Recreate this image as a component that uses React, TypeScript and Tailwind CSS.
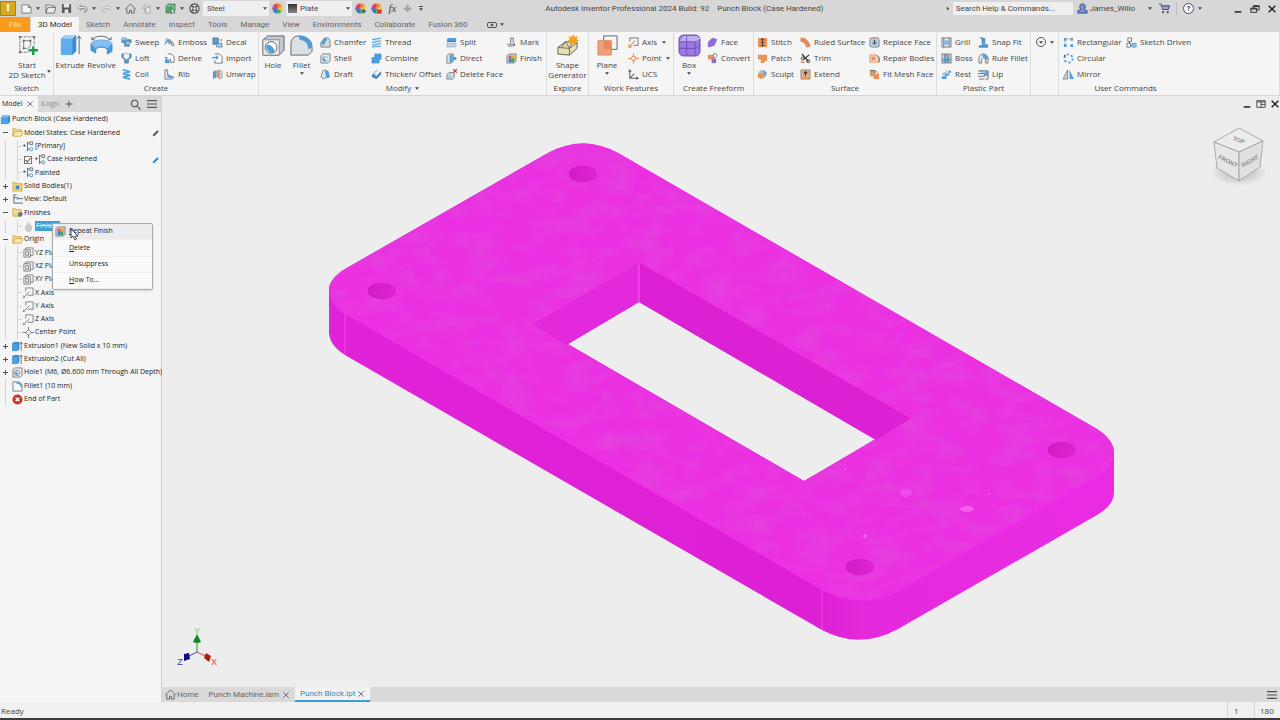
import type { ReactNode } from "react";

const BLUE = "#4f9fdc";
const SKY = "#9ccbf0";
const INK = "#5c6268";
const CLAY = "#e8935c";
const VIOLET = "#8f6bd6";

const glyphs: Record<string, ReactNode> = {
  sweep: <><path d="M1 1h5v2h5v3H9v4H4V6H1z" fill={BLUE} stroke={INK} strokeWidth=".7" /><path d="M1 1h5v2H1z" fill={SKY} /><path d="M6 5h3v3H6z" fill={SKY} /></>,
  loft: <><path d="M1 1h10v4L8 7v4H4V7L1 5z" fill={BLUE} stroke={INK} strokeWidth=".7" /><path d="M3 1h6v4L6 7 3 5z" fill="#e7f2fb" /></>,
  coil: <path d="M2 1l8 2-8 2 8 2-8 2 8 2" fill="none" stroke={BLUE} strokeWidth="1.8" />,
  emboss: <><path d="M1 8C3 1 8 1 11 10M3 5c3-2 5 0 6 5" fill="none" stroke={INK} strokeWidth="1" /><path d="M4 4l4 1-2 4z" fill={BLUE} /><path d="M1 4l3-3M2 7l3-3" stroke={BLUE} strokeWidth="1" /></>,
  derive: <><path d="M4 1h4l3 3v6H6" fill="#fff" stroke={INK} strokeWidth=".9" /><path d="M1 7h5v4H1z" fill={BLUE} /><path d="M1 5h2v2M7 6v3" stroke={INK} strokeWidth="1" fill="none" /></>,
  rib: <><path d="M1 1h3v6l7 2-2 2H1z" fill="#e4e7ea" stroke={INK} strokeWidth=".8" /><path d="M4 4c1 3 3 4 6 4l-2 2-4-1z" fill={BLUE} /></>,
  decal: <><path d="M1 1h6v7H1z" fill={BLUE} stroke={INK} strokeWidth=".7" /><path d="M5 7h6v4H5z" fill={SKY} stroke={INK} strokeWidth=".6" /><path d="M10 2v3" stroke={INK} /></>,
  importIcon: <><path d="M3 1h5l3 3v7H3V8" fill="#fff" stroke={INK} strokeWidth=".9" /><path d="M0 5h6M4 3l2.500 2L4 7" fill="none" stroke={BLUE} strokeWidth="1.300" /></>,
  unwrap: <><path d="M1 3l4-2v8l-4 2z" fill={BLUE} /><path d="M5 2l3-1v9l-3-1z" fill={CLAY} /><path d="M8 1l3 2v7l-3 1z" fill="#d9dcdf" stroke={INK} strokeWidth=".5" /></>,
  chamfer: <><path d="M1 6l4-5h4l2 3v7H1z" fill="#d9dcdf" stroke={INK} strokeWidth=".8" /><path d="M1 7l4-6 3 1-4 7z" fill={BLUE} /></>,
  shell: <><path d="M1 3l2-2h8v8l-2 2H1z" fill="#e2e5e8" stroke={INK} strokeWidth=".8" /><path d="M3 4h5v5H3z" fill={BLUE} /><path d="M4 5h4v4z" fill="#fff" /></>,
  draft: <><path d="M1 9l2-7 3-1 1 8-3 2z" fill="#dfe2e5" stroke={INK} strokeWidth=".7" /><path d="M6 1l3 1 2 7-4 1z" fill={BLUE} /></>,
  thread: <><path d="M2 1h8v10H2z" fill="#e2e5e8" /><path d="M1 3l10-2M1 6l10-2M1 9l10-2M1 11l10-1" stroke={BLUE} strokeWidth="1.100" /></>,
  combine: <path d="M4 1h7v6H9v4H1V5h3z" fill={BLUE} stroke="#377fb8" strokeWidth=".5" />,
  thicken: <><path d="M1 7l5-5 5 2-5 6z" fill={BLUE} stroke={INK} strokeWidth=".7" /><path d="M3 5l4-3 3 1-4 4z" fill="#fff" /><path d="M1 7l5 2 5-5v2l-5 5-5-2z" fill="#4a86b8" /></>,
  split: <><path d="M1 2l2-1h8v3l-1 1H1z" fill={BLUE} /><path d="M1 5h10" stroke={INK} /><path d="M1 7h10v3l-1 1H1z" fill="#c9d4dc" stroke={BLUE} strokeWidth=".5" /></>,
  direct: <><path d="M1 3l2-2h5v8l-2 2H1z" fill="#e2e5e8" stroke={INK} strokeWidth=".8" /><path d="M4 2h3v8H4z" fill={BLUE} /><path d="M7 6h4M9 4l2 2-2 2" stroke="#2d76ad" fill="none" /></>,
  deleteFace: <><path d="M1 6l2-2h6v5l-2 2H1z" fill="#d9dcdf" stroke={INK} strokeWidth=".8" /><path d="M2 7h4v3H2z" fill={SKY} /><path d="M8 0l4 4m0-4L8 4" stroke="#d33131" strokeWidth="1.200" /></>,
  mark: <><path d="M5 1h3v5l2 2H4l1-2z" fill="#dfe2e5" stroke={INK} strokeWidth=".8" /><path d="M3 7c-3 3 1 4 7 2" stroke={INK} fill="none" /></>,
  finish: <><path d="M1 3l2-2h8v8l-2 2H1z" fill="#c9ccd0" stroke={INK} strokeWidth=".7" /><path d="M3 3h3v3H3z" fill="#e8473c" /><path d="M6 3h4v3H6z" fill="#f5a623" /><path d="M3 6h3v4H3z" fill="#3a7bd5" /><path d="M6 6h3v4H6z" fill="#3ca55c" /></>,
  axis: <><path d="M2 5V1h9v8H6" fill="none" stroke={INK} strokeWidth=".9" /><path d="M1 11l7-7M1 8v3h3" stroke={CLAY} strokeWidth="1.200" fill="none" /></>,
  point: <><path d="M6 0v12M0 6h12" stroke={CLAY} /><path d="M6 3l3 3-3 3-3-3z" fill="#fff" stroke={CLAY} strokeWidth="1.200" /></>,
  ucs: <><path d="M2 1v9h9M2 10l5-5" stroke={INK} fill="none" strokeWidth="1.100" /><path d="M0 3l2-3 2 3zM9 8l3 2-3 2z" fill={INK} /></>,
  face: <path d="M2 5l4-4 5 2c-2 2-2 4-3 6l-6 2c-1-2-1-4 0-6z" fill={VIOLET} stroke="#6d4fb0" strokeWidth=".6" />,
  convert: <><path d="M1 2h6v5H1z" fill={CLAY} /><path d="M5 6h5v5H5z" fill={VIOLET} /><path d="M7 1h3l1 2-2 2H7z" fill="#fff" stroke={INK} strokeWidth=".8" /></>,
  stitch: <><path d="M1 1h10v10H1z" fill={CLAY} /><path d="M6 1v10M4 3h4M4 6h4M4 9h4" stroke="#5d3a22" strokeWidth=".9" /></>,
  patch: <path d="M1 2h10v7H8v2H4V7H1z" fill={CLAY} />,
  sculpt: <><circle cx="6" cy="5" r="4" fill="#b8bdc2" /><path d="M1 5h6v5l-3 1-3-2z" fill={CLAY} /><path d="M7 1l4 3-3 6z" fill="#6f9ec4" /></>,
  ruled: <path d="M1 1c6 0 9 4 10 9l-4 1C6 7 4 5 1 5zM5 2L4 6M8 5L6 8" fill={CLAY} stroke="#c2693a" strokeWidth=".6" />,
  trim: <><path d="M2 1l7 8M10 2L4 7" stroke="#333" strokeWidth="1.300" /><circle cx="9" cy="9" r="1.600" fill="none" stroke="#333" /><circle cx="3" cy="6" r="1.600" fill="none" stroke="#333" /><path d="M1 9h4v2H1z" fill={CLAY} /></>,
  extend: <><path d="M1 1h10v10H1z" fill="#d9b292" stroke={INK} strokeWidth=".6" /><path d="M1 9h10v2H1z" fill={CLAY} /><path d="M6 2l2.500 3h-2v3h-1V5h-2z" fill="#333" /></>,
  replaceFace: <><path d="M1 3l2-2h6l2 2v7l-2 1H3l-2-1z" fill="#cfd5da" stroke={INK} strokeWidth=".8" /><path d="M3 3h6v6H3z" fill={SKY} /><path d="M6 3v4M4 6l2 2 2-2" stroke="#333" fill="none" /><path d="M1 1h10" stroke={CLAY} /></>,
  repair: <><path d="M1 2h6l4 3v5H1z" fill="#f0d6c6" stroke={CLAY} /><path d="M3 4h4v4H3z" fill={CLAY} /><path d="M8 2l3 3v5" stroke={INK} fill="none" /></>,
  fitMesh: <><path d="M1 1h6v4H1z" fill={INK} /><path d="M1 2h5v6H1z" fill="#c9a368" /><path d="M5 5h6v6H5z" fill={CLAY} /><path d="M7 2l3 2" stroke={CLAY} strokeWidth="1.200" /></>,
  grill: <><path d="M1 1h10v10H1z" fill="#dfe6ec" stroke={INK} strokeWidth=".8" /><path d="M3 1v10M9 1v10" stroke={INK} strokeWidth=".8" /><circle cx="6" cy="6" r="2" fill={SKY} stroke={BLUE} /></>,
  boss: <><path d="M1 1h3v10H1zM5 1h2v10H5zM8 1h3v10H8z" fill="#cfd6dc" stroke={INK} strokeWidth=".8" /><path d="M2 6h8v3H2z" fill={BLUE} /></>,
  rest: <><path d="M1 8h3V5h4V2h3v2H9v3H6v4H1z" fill={BLUE} /><path d="M1 6h2V4h3V1" fill="none" stroke="#8d99a3" strokeWidth=".7" /></>,
  snapFit: <><path d="M4 1h4v7h3v3H1V9h3z" fill={BLUE} /><path d="M2 1h3v3" fill="none" stroke={INK} /><path d="M1 11h10" stroke={INK} /></>,
  ruleFillet: <><path d="M1 11V6c0-3 2-5 5-5s5 3 5 5v5H8V7L6 5 4 7v4z" fill="#e2e5e8" stroke={INK} strokeWidth=".8" /><path d="M5 1c4 0 6 2 6 6H8C8 5 7 4 5 4z" fill={BLUE} /></>,
  lip: <><path d="M0 2h11v4H7" fill={SKY} /><path d="M0 2h11v9H8M0 5h7v3H0M1 11h6" fill="none" stroke={INK} strokeWidth=".9" /><path d="M8 3h3v5H8z" fill={BLUE} /></>,
  rectangular: <><path d="M2 2h8M2 2v8" stroke={INK} strokeWidth=".8" strokeDasharray="1 1" /><path d="M1 1h3v3H1zM1 8h3v3H1zM8 8h3v3H8z" fill={BLUE} /><path d="M8 1h3v3H8z" fill="#8b99a5" /></>,
  circular: <><circle cx="6" cy="6" r="4.500" fill="none" stroke={BLUE} strokeWidth="2" strokeDasharray="2.400 2.300" /><path d="M1 2h2v2H1z" fill={INK} /></>,
  mirror: <><path d="M5 1v10H0z" fill="#c9d0d6" stroke={INK} strokeWidth=".7" /><path d="M7 1v10h5z" fill={BLUE} /></>,
  sketchDriven: <><path d="M2 1h4v4H2zM1 7h4v4H1z" fill="#fff" stroke={INK} strokeWidth=".9" /><path d="M7 7h4v4H7z" fill={SKY} stroke={BLUE} /><path d="M4 5v2M5 9h2" stroke={INK} /></>,
  part: <><path d="M1 4l2-3h8v7l-2 3H1z" fill="#2f86d1" /><path d="M1 4l2-3h8L9 4z" fill="#7fbdf0" /><path d="M1 4h8v7H1z" fill="#4ba0e6" /></>,
  folder: <><path d="M1 10V2h3l1 1h5v2" fill="#f7dc8c" stroke="#c79a2b" strokeWidth=".8" /><path d="M1 10l2-5h9l-2 5z" fill="#fbe9b4" stroke="#c79a2b" strokeWidth=".8" /></>,
  bodies: <><path d="M1 2h4l1 1h5v8H1z" fill="#f5d676" stroke="#c79a2b" strokeWidth=".8" /><path d="M4 5h4v4H4z" fill="#3d8ac9" /></>,
  finishes: <><path d="M1 10V2h3l1 1h5v7z" fill="#f7dc8c" stroke="#c79a2b" strokeWidth=".8" /><circle cx="9" cy="8" r="2.600" fill="#4a7fd0" /><path d="M9 8V5.400A2.600 2.600 0 0 1 11.600 8z" fill="#e34b3f" /><path d="M9 8H6.400A2.600 2.600 0 0 0 9 10.600z" fill="#35a051" /></>,
  state: <><path d="M0 5h3M1.500 3.500v3M5 1v10M5 2h2M5 9h2" stroke={INK} fill="none" /><path d="M7.500 1h3v3h-3z" fill="none" stroke={INK} strokeWidth=".9" /><circle cx="9" cy="9" r="1.700" fill="#fff" stroke="#3d8ac9" /></>,
  view: <><path d="M2 1v9h3M2 4h3M2 1h3M7 5h5M7 10h5" stroke={INK} fill="none" /><path d="M5 3h2v3H5zM5 9h2v2H5z" fill={BLUE} /></>,
  flame: <path d="M6 0c0 3 4 4 4 7.500C10 10 8 12 6 12s-4-2-4-4.500C2 5 5 4 6 0z" fill="#c9c9c9" />,
  plane: <path d="M1 3h7v8H1zM3 3V1h8v8H8M3 5h3v4H3z" fill="none" stroke={INK} strokeWidth=".8" />,
  workAxis: <path d="M3 5V1h8v8H5M0 12l7-7M0 9v3h3" fill="none" stroke={INK} strokeWidth=".8" />,
  center: <><path d="M6 0v12M0 6h12" stroke={INK} strokeWidth=".9" /><path d="M6 3l3 3-3 3-3-3z" fill="#fff" stroke={INK} strokeWidth=".9" /></>,
  extrusion: <><path d="M0 3l2-2h6v8l-2 2H0z" fill="#3a8dd2" /><path d="M0 3h6v8H0z" fill={BLUE} /><path d="M10 11V2M8.500 3.500L10 1l1.500 2.500" stroke={INK} fill="none" strokeWidth=".9" /></>,
  hole: <><path d="M1 3l2-2h8v8l-2 2H1z" fill="#e5e8ea" stroke={INK} strokeWidth=".8" /><circle cx="5.500" cy="6.500" r="2.800" fill="#fff" stroke={INK} strokeWidth=".8" /><circle cx="5" cy="7" r="1.500" fill={BLUE} /></>,
  fillet: <><path d="M1 11V1h5c3 0 5 2 5 5v5z" fill="#f4f6f8" stroke={INK} strokeWidth=".8" /><path d="M5 1c4 0 6 2 6 6L9 6C9 4 8 3 5 3z" fill={BLUE} /></>,
  end: <><circle cx="6" cy="6" r="5.500" fill="#c9352d" /><path d="M4 4l4 4m0-4L4 8" stroke="#fff" strokeWidth="1.500" /></>,
  newFile: <path d="M1 2h7l3 3v6H1zM8 2v3h3" fill="#f4f4f4" stroke={INK} strokeWidth=".8" />,
  open: <path d="M1 11V2h4l1 1h4v2M1 11l2-6h9l-2 6z" fill="#ececec" stroke={INK} strokeWidth=".9" />,
  save: <><path d="M1 1h9l1 1v9H1z" fill="#555b60" /><path d="M3 1h6v4H3zM4 7h4v4H4z" fill="#e7e7e7" /></>,
  undo: <path d="M4 2L1 5l3 3V6h4c2 0 2 3 0 3v1c4 0 4-6 0-6H4z" fill="#eee" stroke={INK} strokeWidth=".7" />,
  redo: <path d="M8 2l3 3-3 3V6H4C2 6 2 9 4 9v1C0 10 0 4 4 4h4z" fill="#e6e6e6" stroke="#a9a9a9" strokeWidth=".7" />,
  home: <path d="M0 7l6-6 6 6M2 6v5h3V8h2v3h3V6" fill="none" stroke={INK} strokeWidth="1" />,
  update: <path d="M5 1L2 6h3l-2 5M5 5h5v6H5zM7 3h3v2" fill="#e4e4e4" stroke="#a3a3a3" strokeWidth=".9" />,
  select: <><path d="M1 3l2-2h8v7l-2 3H1z" fill="#4da56a" stroke={INK} strokeWidth=".6" /><path d="M1 3h8v8" stroke="#d9f0df" strokeWidth=".6" fill="none" /><path d="M7 5v7l2-2 2 1z" fill="#fff" stroke="#333" strokeWidth=".5" /></>,
  wheel: <><circle cx="6" cy="6" r="5" fill="#dedede" stroke="#444" strokeWidth="1.200" /><circle cx="6" cy="6" r="2" fill="none" stroke="#444" /><path d="M2.500 2.500l2 2m3 3l2 2m0-7l-2 2m-3 3l-2 2" stroke="#444" strokeWidth="1.300" /></>,
  colors: <><circle cx="6" cy="6" r="5.500" fill="#f2c230" /><path d="M6 6V.5A5.500 5.500 0 0 1 10.800 3.200z" fill="#f0872d" /><path d="M6 6L.9 4A5.500 5.500 0 0 1 6 .5z" fill="#e03d64" /><path d="M6 6L1 8.500A5.500 5.500 0 0 1 .9 4z" fill="#7a55c7" /><path d="M6 6v5.500A5.500 5.500 0 0 1 1 8.500z" fill="#2a7fd4" /><path d="M6 6l4.500 3.200A5.500 5.500 0 0 1 6 11.500z" fill="#41ad55" /></>,
  plus: <path d="M4.500 1h3v3.500H11v3H7.500V11h-3V7.500H1v-3h3.500z" fill="#a3a3a3" />,
  user: <path d="M6 1c2 0 3 1 3 3 0 1-.5 2-1 3l3 1.500V11H1V8.500L4 7C3.500 6 3 5 3 4c0-2 1-3 3-3z" fill="#7d93cf" stroke="#32457f" strokeWidth="1" />,
  cart: <><path d="M0 1h2l2 6h6l1.500-4H3" fill="none" stroke="#44527e" strokeWidth="1.100" /><path d="M4 4h7M4.500 5.500h6" stroke="#44527e" strokeWidth=".7" /><circle cx="4.500" cy="10" r="1.200" fill="#44527e" /><circle cx="9.500" cy="10" r="1.200" fill="#44527e" /></>,
  search: <><circle cx="5" cy="5" r="3.600" fill="none" stroke="#555" strokeWidth="1.200" /><path d="M8 8l3.500 3.500" stroke="#555" strokeWidth="1.300" /></>,
  menu: <path d="M0 2h12M0 6h12M0 10h12" stroke="#555" strokeWidth="1.400" />,
  close: <path d="M2 2l8 8m0-8l-8 8" stroke="#555" strokeWidth="1.200" />,
  closeBold: <path d="M2 2l8 8m0-8l-8 8" stroke="#222" strokeWidth="1.700" />,
  add: <path d="M6 1v10M1 6h10" stroke="#555" strokeWidth="1.500" />,
  pencil: <path d="M1 11l1-3 6-6 2 2-6 6z" fill="currentColor" />,
  check: <path d="M2 6l3 3 5-6" fill="none" stroke="#555" strokeWidth="1.600" />,
  minimize: <path d="M2 9.500h8" stroke="#222" strokeWidth="1.800" />,
  restore: <path d="M1 5h7v5H1zM4 5V2h7v5H8M1 6h7M4 3h7" fill="none" stroke="#222" strokeWidth="1.100" />,
  tile: <path d="M1 2h10v8H1zM1 3.500h10M6 3v7M6 6.500h5" fill="none" stroke="#333" strokeWidth="1" />,
};

glyphs.adjust = <>{glyphs.colors}<path d="M9.500 6.500v5M7 9h5" stroke="#2a63c8" strokeWidth="1.600" /></>;
glyphs.clear = <>{glyphs.colors}<path d="M7.500 7.500l4 4m0-4l-4 4" stroke="#d62828" strokeWidth="1.600" /></>;

const bigGlyphs: Record<string, ReactNode> = {
  sketch: <><path d="M4 3h15M4 3v16M19 3v9M4 19h9" stroke="#777" fill="none" strokeDasharray="3 1" /><path d="M8 7v8h4c3-1 4-4 3-8z" fill="none" stroke="#888" /><path d="M3 2h2v2H3zM18 2h2v2h-2zM3 18h2v2H3zM7 6h2v2H7zM14 6h2v2h-2zM7 14h2v2H7z" fill={INK} /><path d="M18 13v9M13 17h10" stroke="#1d9a50" strokeWidth="2.600" /></>,
  extrude: <><path d="M2 5l4-4h12v17l-4 4H2z" fill="#3a8bd0" /><path d="M2 5h12v17H2z" fill="#5faeec" /><path d="M2 5l4-4h12l-4 4z" fill="#9fd0f7" /><path d="M21 21V3M19 5l2-3 2 3" stroke={INK} fill="none" /></>,
  revolve: <><path d="M1 10c4-5 18-5 22 0v8l-5 3v-5c-3-3-9-3-12 0v4l-5-3z" fill="#489ae0" stroke="#397bb2" strokeWidth=".7" /><path d="M1 10c4-5 18-5 22 0l-5 5c-3-3-9-3-12 0z" fill="#83c0f2" /><path d="M2 6c5-5 14-5 19 0M2 3v3h3M19 6h3V3" fill="none" stroke={INK} /></>,
  hole: <><path d="M1 6l5-4h17v15l-5 5H1z" fill="#c4c8cc" stroke={INK} /><path d="M1 6h17v16H1z" fill="#e6e8ea" stroke={INK} strokeWidth=".6" /><circle cx="9.500" cy="14" r="6" fill="#fff" stroke={INK} /><path d="M5 11c4 0 8 3 8 8-5 2-10-3-8-8z" fill="#4e9ddd" /></>,
  fillet: <><path d="M1 22V10c0-4 3-8 8-8 9 0 14 5 14 12v4l-4 4z" fill="#dde0e3" stroke={INK} /><path d="M9 2c9 0 14 5 14 12l-4 2c0-5-2-9-9-10z" fill="#4e9ddd" /></>,
  shape: <><path d="M2 14l8-6 12 1v6l-8 7-12-1z" fill="#e9dda9" stroke={INK} /><path d="M2 14l12 1 8-6M14 15v7M6 14l4-6 4 7 3-6" fill="none" stroke={INK} strokeWidth=".9" /><path d="M18 0l1.500 3 3.500-1-1.500 3L24 7l-3 1v3l-3-2-3 2v-3l-3-1 2.500-2L13 2l3.500 1z" fill="#f3a319" /></>,
  plane: <><path d="M8 2h14v14H8z" fill="#f5f5f5" stroke={INK} /><path d="M2 7h14v15H2z" fill="#eda27a" stroke="#cf7748" strokeWidth=".7" /><path d="M8 7h8v9H8z" fill="#e58b5d" /></>,
  box: <><rect x="1" y="1" width="22" height="22" rx="5" fill="#9a79e0" stroke="#4e3a91" strokeWidth=".8" /><path d="M2 7l4-5h14l3 3-5 3H2z" fill="#c4aef2" /><path d="M2 8h16v14M9 2v20M2 15h16l5-4" fill="none" stroke="#6747b5" strokeWidth=".8" /></>,
};

function Glyph({ name, className = "size-[11px]" }: { name: string; className?: string }) {
  return (
    <svg viewBox="0 0 12 12" className={`shrink-0 ${className}`} aria-hidden="true">
      {glyphs[name]}
    </svg>
  );
}

function Caret({ className = "" }: { className?: string }) {
  return (
    <svg viewBox="0 0 8 5" className={`h-[3px] w-1 shrink-0 ${className}`} aria-hidden="true">
      <path d="M0 0h8L4 5z" fill="#444" />
    </svg>
  );
}

function Tool({ icon, label, caret }: { icon: string; label: string; caret?: boolean }) {
  return (
    <button type="button" className="flex h-4 items-center gap-[3px] whitespace-nowrap text-left">
      <Glyph name={icon} />
      <span>{label}</span>
      {caret ? <Caret className="ml-[2px]" /> : null}
    </button>
  );
}

function Tools({ width, items }: { width: string; items: [string, string, boolean?][] }) {
  return (
    <div className={`flex shrink-0 flex-col ${width}`}>
      {items.map(([icon, label, caret]) => (
        <Tool key={label} icon={icon} label={label} caret={caret} />
      ))}
    </div>
  );
}

function BigTool({ icon, lines, caret, width }: { icon: string; lines: string[]; caret?: boolean; width: string }) {
  return (
    <button type="button" className={`flex shrink-0 flex-col items-center whitespace-nowrap leading-[10px] ${width}`}>
      <svg viewBox="0 0 24 24" className="mb-[3px] size-[23px]" aria-hidden="true">
        {bigGlyphs[icon]}
      </svg>
      {lines.map((line) => (
        <span key={line}>{line}</span>
      ))}
      {caret ? <Caret className="mt-[2px]" /> : null}
    </button>
  );
}

function Group({ label, width, caret, children }: { label: string; width: string; caret?: boolean; children: ReactNode }) {
  return (
    <section className={`flex flex-col border-r border-[#dcdcdc] ${width}`}>
      <div className="flex h-[50px] items-start pt-[2px]">{children}</div>
      <div className="flex items-center justify-center gap-1 leading-[12px]">
        {label}
        {caret ? <Caret /> : null}
      </div>
    </section>
  );
}

function TitleBar() {
  return (
    <header className="flex h-[17px] items-center justify-between font-[Roboto,'Open_Sans',sans-serif] text-[8px] text-[#444]">
      <div className="flex items-center gap-[5px]">
        <span className="flex h-[15px] w-4 items-center justify-center border border-[#a8831a] bg-[#d8a91e] font-serif text-[10px] font-bold text-white">I</span>
        <button type="button" aria-label="New" className="flex items-center gap-1"><Glyph name="newFile" /><Caret /></button>
        <button type="button" aria-label="Open"><Glyph name="open" /></button>
        <button type="button" aria-label="Save"><Glyph name="save" /></button>
        <button type="button" aria-label="Undo" className="flex items-center gap-1"><Glyph name="undo" /><Caret /></button>
        <button type="button" aria-label="Redo" className="flex items-center gap-1"><Glyph name="redo" /><Caret /></button>
        <button type="button" aria-label="Home"><Glyph name="home" /></button>
        <button type="button" aria-label="Update" className="flex items-center gap-1"><Glyph name="update" /><Caret /></button>
        <button type="button" aria-label="Select" className="flex items-center gap-1"><Glyph name="select" /><Caret /></button>
        <button type="button" aria-label="Wheel"><Glyph name="wheel" /></button>
        <div className="relative -ml-[2px]">
          <select aria-label="Material" className="block h-[15px] w-[66px] appearance-none bg-[#efefef] pl-1 leading-[15px]">
            <option>Steel</option>
          </select>
          <Caret className="pointer-events-none absolute top-[6px] right-[2px]" />
        </div>
        <button type="button" aria-label="Colors" className="-ml-[2px]"><Glyph name="colors" /></button>
        <div className="relative -ml-[2px]">
          <select aria-label="Appearance" className="block h-[15px] w-[66px] appearance-none bg-[#efefef] pl-[14px] leading-[15px]">
            <option>Plate</option>
          </select>
          <span className="pointer-events-none absolute top-[3px] left-[2px] h-[9px] w-[9px] bg-gradient-to-b from-[#333] to-[#888]" />
          <Caret className="pointer-events-none absolute top-[6px] right-[2px]" />
        </div>
        <button type="button" aria-label="Adjust" className="-ml-[2px]"><Glyph name="adjust" /></button>
        <button type="button" aria-label="Clear"><Glyph name="clear" /></button>
        <button type="button" className="w-[11px] font-['Liberation_Serif',serif] text-[11px] leading-none italic">fx</button>
        <button type="button" aria-label="Add"><Glyph name="plus" className="size-[9px]" /></button>
        <button type="button" aria-label="Customize" className="ml-[2px] flex h-[5px] items-end border-t border-[#444]"><Caret /></button>
      </div>

      <h1 className="flex gap-2 whitespace-nowrap">
        <span>Autodesk Inventor Professional 2024 Build: 92</span>
        <span>Punch Block (Case Hardened)</span>
      </h1>

      <div className="flex items-center">
        <Caret className="-rotate-90" />
        <input aria-label="Search help" placeholder="Search Help & Commands..." className="mr-1 ml-[3px] h-[13px] w-[120px] bg-[#efefef] px-[3px] placeholder:text-[#444]" />
        <button type="button" className="flex items-center gap-[2px]"><Glyph name="user" />James_Willo</button>
        <Caret className="mr-[7px] ml-[13px]" />
        <button type="button" aria-label="Cart"><Glyph name="cart" /></button>
        <span className="mx-[6px] h-3 w-px bg-[#bfbfbf]" />
        <button type="button" aria-label="Help" className="flex size-[11px] items-center justify-center rounded-full border border-[#3b4a7a] bg-white text-[8px] leading-none font-bold text-[#3b4a7a]">?</button>
        <Caret className="mr-[31px] ml-1" />
        <div className="flex gap-[7px] pr-[3px]">
          <button type="button" aria-label="Minimize"><Glyph name="minimize" className="size-[10px]" /></button>
          <button type="button" aria-label="Restore"><Glyph name="restore" className="size-[10px]" /></button>
          <button type="button" aria-label="Close"><Glyph name="closeBold" className="size-[10px]" /></button>
        </div>
      </div>
    </header>
  );
}

const ribbonTabs = ["Sketch", "Annotate", "Inspect", "Tools", "Manage", "View", "Environments", "Collaborate", "Fusion 360"];

function RibbonTabs() {
  return (
    <nav className="flex h-[15px] items-stretch gap-px font-[Roboto,'Open_Sans',sans-serif] text-[8px] text-[#666]">
      <button type="button" className="w-[30px] bg-[#fb9a1c] text-[#ffe3ba]">File</button>
      <button type="button" className="w-[48px] bg-[#f5f5f5] text-[#333]">3D Model</button>
      {ribbonTabs.map((tab) => (
        <button key={tab} type="button" className="px-[6px] whitespace-nowrap">{tab}</button>
      ))}
      <button type="button" aria-label="Collapse ribbon" className="ml-3 flex items-center gap-[3px]">
        <span className="flex h-[6px] w-[10px] items-center justify-center rounded-[2px] border border-[#555]"><Caret className="rotate-180" /></span>
        <Caret />
      </button>
    </nav>
  );
}

function Ribbon() {
  return (
    <div className="flex h-[64px] border-b border-[#d6d6d6] bg-[#f5f5f5] text-[8px] text-[#444]">
      <Group label="Sketch" width="w-[54px]">
        <BigTool icon="sketch" lines={["Start", "2D Sketch"]} width="w-[54px]" />
        <Caret className="mt-[36px] -ml-[7px]" />
      </Group>
      <Group label="Create" width="w-[205px]">
        <BigTool icon="extrude" lines={["Extrude"]} width="w-[32px]" />
        <BigTool icon="revolve" lines={["Revolve"]} width="w-[31px]" />
        <span className="w-1" />
        <Tools width="w-[43px]" items={[["sweep", "Sweep"], ["loft", "Loft"], ["coil", "Coil"]]} />
        <Tools width="w-[48px]" items={[["emboss", "Emboss"], ["derive", "Derive"], ["rib", "Rib"]]} />
        <Tools width="w-[46px]" items={[["decal", "Decal"], ["importIcon", "Import"], ["unwrap", "Unwrap"]]} />
      </Group>
      <Group label="Modify" width="w-[288px]" caret>
        <BigTool icon="hole" lines={["Hole"]} width="w-[28px]" />
        <BigTool icon="fillet" lines={["Fillet"]} width="w-[29px]" caret />
        <span className="w-1" />
        <Tools width="w-[51px]" items={[["chamfer", "Chamfer"], ["shell", "Shell"], ["draft", "Draft"]]} />
        <Tools width="w-[75px]" items={[["thread", "Thread"], ["combine", "Combine"], ["thicken", "Thicken/ Offset"]]} />
        <Tools width="w-[60px]" items={[["split", "Split"], ["direct", "Direct"], ["deleteFace", "Delete Face"]]} />
        <Tools width="w-[38px]" items={[["mark", "Mark"], ["finish", "Finish"]]} />
      </Group>
      <Group label="Explore" width="w-[42px]">
        <BigTool icon="shape" lines={["Shape", "Generator"]} width="w-[41px]" />
      </Group>
      <Group label="Work Features" width="w-[85px]">
        <BigTool icon="plane" lines={["Plane"]} width="w-[36px]" caret />
        <span className="w-[3px]" />
        <Tools width="w-[45px]" items={[["axis", "Axis", true], ["point", "Point", true], ["ucs", "UCS"]]} />
      </Group>
      <Group label="Create Freeform" width="w-[80px]">
        <BigTool icon="box" lines={["Box"]} width="w-[30px]" caret />
        <span className="w-[3px]" />
        <Tools width="w-[45px]" items={[["face", "Face"], ["convert", "Convert"]]} />
      </Group>
      <Group label="Surface" width="w-[183px]">
        <span className="w-[3px]" />
        <Tools width="w-[43px]" items={[["stitch", "Stitch"], ["patch", "Patch"], ["sculpt", "Sculpt"]]} />
        <Tools width="w-[69px]" items={[["ruled", "Ruled Surface"], ["trim", "Trim"], ["extend", "Extend"]]} />
        <Tools width="w-[66px]" items={[["replaceFace", "Replace Face"], ["repair", "Repair Bodies"], ["fitMesh", "Fit Mesh Face"]]} />
      </Group>
      <Group label="Plastic Part" width="w-[94px]">
        <span className="w-[4px]" />
        <Tools width="w-[37px]" items={[["grill", "Grill"], ["boss", "Boss"], ["rest", "Rest"]]} />
        <Tools width="w-[52px]" items={[["snapFit", "Snap Fit"], ["ruleFillet", "Rule Fillet"], ["lip", "Lip"]]} />
      </Group>
      <section className="w-[28px] border-r border-[#dcdcdc]">
        <button type="button" aria-label="More panels" className="mt-[5px] ml-[5px] flex items-center gap-1">
          <span className="flex size-[10px] items-center justify-center rounded-full border border-[#555]"><Caret /></span>
          <Caret />
        </button>
      </section>
      <Group label="User Commands" width="min-w-[135px] pr-[87px] flex-1">
        <span className="w-[4px]" />
        <Tools width="w-[63px]" items={[["rectangular", "Rectangular"], ["circular", "Circular"], ["mirror", "Mirror"]]} />
        <Tools width="w-[65px]" items={[["sketchDriven", "Sketch Driven"]]} />
      </Group>
    </div>
  );
}

type TreeNode = {
  icon: string;
  label: string;
  level: 0 | 1 | 2;
  mark?: "+" | "-";
  checked?: boolean;
  pencil?: string;
  selected?: boolean;
};

const tree: TreeNode[] = [
  { icon: "part", label: "Punch Block (Case Hardened)", level: 0 },
  { icon: "folder", label: "Model States: Case Hardened", level: 1, mark: "-", pencil: "text-[#555]" },
  { icon: "state", label: "[Primary]", level: 2 },
  { icon: "state", label: "Case Hardened", level: 2, checked: true, pencil: "text-[#2f86d1]" },
  { icon: "state", label: "Painted", level: 2 },
  { icon: "bodies", label: "Solid Bodies(1)", level: 1, mark: "+" },
  { icon: "view", label: "View: Default", level: 1, mark: "+" },
  { icon: "finishes", label: "Finishes", level: 1, mark: "-" },
  { icon: "flame", label: "Finish1", level: 2, selected: true },
  { icon: "folder", label: "Origin", level: 1, mark: "-" },
  { icon: "plane", label: "YZ Plane", level: 2 },
  { icon: "plane", label: "XZ Plane", level: 2 },
  { icon: "plane", label: "XY Plane", level: 2 },
  { icon: "workAxis", label: "X Axis", level: 2 },
  { icon: "workAxis", label: "Y Axis", level: 2 },
  { icon: "workAxis", label: "Z Axis", level: 2 },
  { icon: "center", label: "Center Point", level: 2 },
  { icon: "extrusion", label: "Extrusion1 (New Solid x 10 mm)", level: 1, mark: "+" },
  { icon: "extrusion", label: "Extrusion2 (Cut All)", level: 1, mark: "+" },
  { icon: "hole", label: "Hole1 (M6, Ø6.600 mm Through All Depth)", level: 1, mark: "+" },
  { icon: "fillet", label: "Fillet1 (10 mm)", level: 1 },
  { icon: "end", label: "End of Part", level: 1 },
];

function TreeRow({ node }: { node: TreeNode }) {
  return (
    <li className="flex items-center whitespace-nowrap">
      {node.level > 0 ? (
        <span className="flex w-[12px] shrink-0 items-center self-stretch pl-[2px]">
          {node.mark ? (
            <svg viewBox="0 0 7 7" className="size-[7px]" aria-hidden="true">
              <path d={node.mark === "+" ? "M1 3.500h5M3.500 1v5" : "M1 3.500h5"} stroke="#555" />
            </svg>
          ) : (
            <span className="ml-[3px] w-px self-stretch bg-[#d2d2d2]" />
          )}
        </span>
      ) : null}
      {node.level === 2 ? (
        <span className="flex w-[11px] shrink-0 items-center self-stretch pl-[5px]">
          <span className="w-px self-stretch bg-[#d2d2d2]" />
          <span className="h-px w-1 bg-[#d2d2d2]" />
        </span>
      ) : null}
      {node.checked ? (
        <label className="relative mr-[3px] ml-px block size-[8px]">
          <input type="checkbox" defaultChecked aria-label={node.label} className="block size-[8px] appearance-none border border-[#777] bg-white" />
          <Glyph name="check" className="pointer-events-none absolute inset-0 size-[8px]" />
        </label>
      ) : null}
      <Glyph name={node.icon} className="mr-px size-[11px]" />
      <span className={node.selected ? "bg-[#3d9fd3] px-px text-[#cfe8f5] line-through" : ""}>{node.label}</span>
      {node.pencil ? <Glyph name="pencil" className={`mr-[2px] ml-auto size-[8px] ${node.pencil}`} /> : null}
    </li>
  );
}

function ModelBrowser() {
  return (
    <aside className="relative w-[162px] shrink-0 border-r border-[#cfcfcf] bg-[#f5f5f5] font-['Open_Sans','Noto_Sans',sans-serif] text-[7px] text-[#222]">
      <div className="flex h-[16px] items-center bg-[#d9d9d9] pr-1">
        <button type="button" className="flex h-full w-[38px] items-center justify-between bg-[#f5f5f5] pr-1 pl-[2px]">
          Model
          <Glyph name="close" className="size-[8px]" />
        </button>
        <button type="button" className="mr-[5px] ml-[3px] text-[#888]">iLogic</button>
        <button type="button" aria-label="Add tab"><Glyph name="add" className="size-[8px]" /></button>
        <button type="button" aria-label="Search" className="mr-[6px] ml-auto"><Glyph name="search" className="size-[11px]" /></button>
        <button type="button" aria-label="Browser menu"><Glyph name="menu" className="size-[10px]" /></button>
      </div>
      <ul className="mt-[1px] grid h-[293px] auto-rows-fr">
        {tree.map((node) => (
          <TreeRow key={node.label} node={node} />
        ))}
      </ul>

      <ContextMenu />
    </aside>
  );
}

const menuItems: [string, string][] = [["R", "epeat Finish"], ["D", "elete"], ["", "Unsuppress"], ["H", "ow To..."]];

function ContextMenu() {
  return (
    <div role="menu" className="absolute top-[127px] left-[52px] grid h-[67px] w-[101px] grid-rows-4 rounded-[2px] border border-[#a9a9a9] bg-[#fafafa] shadow-sm">
      {menuItems.map(([key, rest], index) => (
        <button
          key={rest}
          type="button"
          role="menuitem"
          className={`flex items-center border-b border-[#f0f0f0] pl-[2px] text-left ${index === 0 ? "bg-[#ececec]" : ""}`}
        >
          <span className="w-[14px]">{index === 0 ? <Glyph name="finish" /> : null}</span>
          <span><u>{key}</u>{rest}</span>
        </button>
      ))}
      <svg viewBox="0 0 9 13" className="pointer-events-none absolute top-[4px] left-[17px] h-[13px] w-[9px]" aria-hidden="true">
        <path d="M1 1v9l2-2 2 4 1.500-1L5 8h3z" fill="#fff" stroke="#222" strokeWidth=".8" />
      </svg>
    </div>
  );
}

const holes = [[382, 291], [583, 174], [1062, 450], [860, 567]];

const topFace =
  "M345 269L548 153Q583 134 618 153L1097 429Q1114 440 1114 453Q1114 465 1097 476L897 591Q860 610 822 589L345 313Q329 304 329 290Q329 279 345 269zM639 262L911 418 804 481 532 324z";

function Plate() {
  return (
    <svg viewBox="162 96 1118 591" className="absolute inset-0 size-full" role="img" aria-label="Punch block">
      <defs>
        <linearGradient id="front" x1="0" x2="1">
          <stop offset="0" stopColor="#e022d8" />
          <stop offset=".63" stopColor="#dd20d4" />
          <stop offset=".68" stopColor="#e42adc" />
          <stop offset="1" stopColor="#e92ce2" />
        </linearGradient>
        <linearGradient id="bore" x1="0" x2="1">
          <stop offset="0" stopColor="#d01cc5" />
          <stop offset="1" stopColor="#dd25d4" />
        </linearGradient>
        {/* Brushed metal grain on the top face */}
        <filter id="grain" x="0" y="0" width="100%" height="100%">
          <feTurbulence type="fractalNoise" baseFrequency=".03 .06" numOctaves="3" seed="4" />
          <feColorMatrix values="0 0 0 0 .75  0 0 0 0 .08  0 0 0 0 .72  1.2 0 0 0 -.5" />
          <feComposite in2="SourceGraphic" operator="in" />
        </filter>
      </defs>
      <path fillRule="evenodd" d="M345 269L548 153Q583 134 618 153L1097 429Q1114 440 1114 453V493Q1114 505 1097 515L898 629Q860 650 822 630L345 355Q329 345 329 332V290Q329 279 345 269zM639 302L876 440 804 481 568 344z" fill="url(#front)" />
      <path fillRule="evenodd" d={topFace} fill="#ea30e1" />
      <path fillRule="evenodd" d={topFace} fill="#000" filter="url(#grain)" />
      <path d="M332 300Q336 308 345 313L822 589Q860 610 897 591L1097 476Q1108 470 1112 462" fill="none" stroke="#f02dea" strokeWidth="2" />
      <path d="M345 314v41M822 590v40" stroke="#ef4be6" strokeWidth="1" />
      <path d="M639 262L532 324 568 344 639 302z" fill="#e329dc" />
      <path d="M639 262L911 418 876 440 639 302z" fill="#dc20d3" />
      <path d="M639 263v39" stroke="#f25cec" />
      <path d="M532 324L639 262 911 418" fill="none" stroke="#ef33e8" strokeWidth="1" />
      {holes.map(([cx, cy]) => (
        <ellipse key={cx} cx={cx} cy={cy} rx="15" ry="9" fill="url(#bore)" stroke="#ec38e4" strokeWidth="1" />
      ))}
      <g fill="#f35cec">
        <ellipse cx="906" cy="493" rx="6" ry="4" opacity=".6" />
        <ellipse cx="967" cy="509" rx="7" ry="3" />
        <circle cx="865" cy="536" r="2" />
        <circle cx="845" cy="469" r="1" />
        <circle cx="989" cy="494" r="1" />
      </g>
    </svg>
  );
}

function ViewCube() {
  return (
    <svg viewBox="0 0 60 64" className="absolute top-[29px] right-[11px] h-[64px] w-[60px] font-['Liberation_Sans',sans-serif]" aria-label="View cube">
      <defs>
        <radialGradient id="shadow">
          <stop offset=".5" stopColor="#cfcfcf" />
          <stop offset="1" stopColor="#ededed" />
        </radialGradient>
      </defs>
      <ellipse cx="30" cy="47" rx="28" ry="14" fill="url(#shadow)" />
      <path d="M30 3l24 13-24 11L5 17z" fill="#ececec" stroke="#999" strokeWidth=".8" />
      <path d="M5 17l25 10v29L8 43z" fill="#e6e6e6" stroke="#999" strokeWidth=".8" />
      <path d="M54 16L30 27v29l21-14z" fill="#e0e0e0" stroke="#999" strokeWidth=".8" />
      <g fill="#8c8c8c" fontSize="6" fontWeight="bold" textAnchor="middle">
        <text transform="translate(29 17) rotate(20)">TOP</text>
        <text transform="translate(18 38) rotate(27)">FRONT</text>
        <text transform="translate(42 38) rotate(-29)">RIGHT</text>
      </g>
    </svg>
  );
}

function AxisTriad() {
  return (
    <svg viewBox="0 0 44 42" className="absolute bottom-[20px] left-[13px] h-[42px] w-[44px] font-['Liberation_Sans',sans-serif]" aria-label="Axes">
      <path d="M22 27V14" stroke="#1a9a2b" />
      <path d="M22 27l10 5" stroke="#c44" />
      <path d="M22 27l-10 5" stroke="#44a" />
      <path d="M18 17l4-8 4 8q-4 2-8 0z" fill="#0f8a1d" />
      <path d="M31 28l5 3-2 6-5-4z" fill="#b51a0c" />
      <path d="M9 29l5-1 1 6-6 2z" fill="#0c0c8a" />
      <g fontSize="9" textAnchor="middle">
        <text x="22" y="9" fill="#6cd873">Y</text>
        <text x="39" y="40" fill="#d8443a">X</text>
        <text x="5" y="40" fill="#3a3ac4">Z</text>
      </g>
    </svg>
  );
}

function DocumentTabs() {
  return (
    <nav className="flex h-[15px] items-stretch bg-[#d9d9d9] font-[Roboto,'Open_Sans',sans-serif] text-[8px] text-[#666]">
      <button type="button" className="ml-[3px] flex items-center gap-px"><Glyph name="home" />Home</button>
      <button type="button" className="ml-[10px] flex items-center gap-[3px]">Punch Machine.iam<Glyph name="close" className="size-[8px]" /></button>
      <button type="button" className="ml-[5px] flex items-center gap-[2px] border-b-2 border-[#3a9bd6] bg-[#f2f2f2] px-[5px] text-[#3a86bd]">
        Punch Block.ipt
        <Glyph name="close" className="size-[8px]" />
      </button>
      <button type="button" aria-label="Document list" className="mr-[3px] ml-auto"><Glyph name="menu" className="size-[10px]" /></button>
    </nav>
  );
}

export default function App() {
  return (
    <div className="flex min-h-screen flex-col bg-[#d7d7d7] font-['Open_Sans','Noto_Sans',sans-serif]">
      <TitleBar />
      <RibbonTabs />
      <Ribbon />
      <div className="flex flex-1">
        <ModelBrowser />
        <main className="flex min-w-0 flex-1 flex-col">
          <div className="relative flex-1 overflow-hidden bg-[#ededed]">
            <Plate />
            <div className="absolute top-[3px] right-0 flex gap-1">
              <button type="button" aria-label="Minimize document"><Glyph name="minimize" className="size-[10px]" /></button>
              <button type="button" aria-label="Tile document"><Glyph name="tile" className="size-[10px]" /></button>
              <button type="button" aria-label="Close document"><Glyph name="closeBold" className="size-[10px]" /></button>
            </div>
            <ViewCube />
            <AxisTriad />
          </div>
          <DocumentTabs />
        </main>
      </div>
      <footer className="flex h-[18px] items-stretch border-b-2 border-[#3c3c3c] bg-[#f0f0f0] text-[8px] leading-[16px] text-[#444]">
        <span className="flex-1 pt-px pl-px">Ready</span>
        <span className="w-[27px] border-l border-[#d5d5d5] pt-px pl-[6px]">1</span>
        <span className="w-[26px] border-l border-[#d5d5d5] pt-px pl-[5px]">180</span>
      </footer>
    </div>
  );
}
